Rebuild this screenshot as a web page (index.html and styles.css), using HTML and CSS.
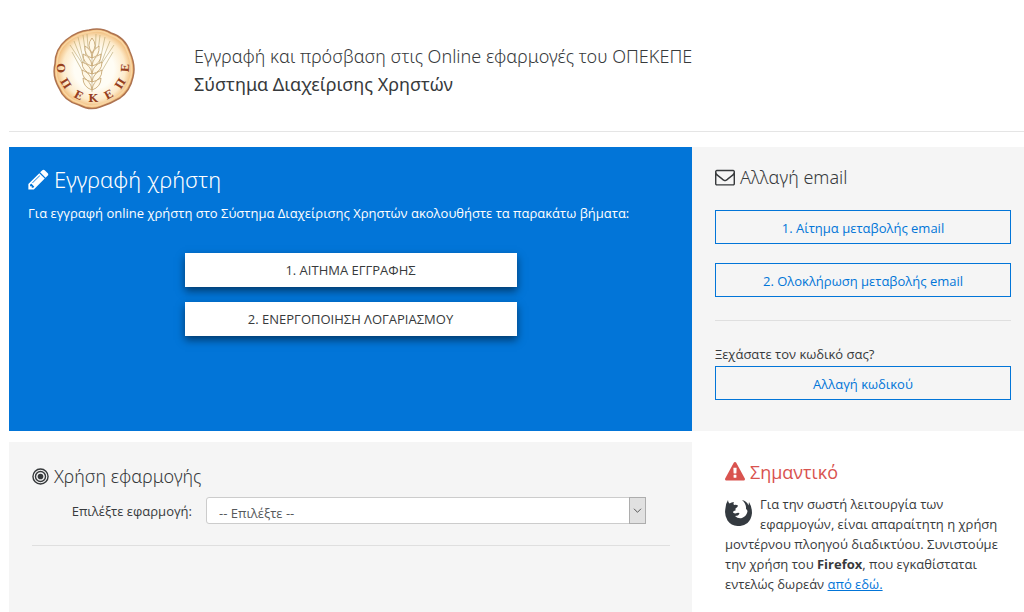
FILE: index.html
```html
<!DOCTYPE html>
<html lang="el">
<head>
<meta charset="utf-8">
<meta name="viewport" content="width=device-width, initial-scale=1">
<title>Σύστημα Διαχείρισης Χρηστών</title>
<link rel="stylesheet" href="styles.css">
</head>
<body>
<div class="page">
  <header class="header">
    <svg class="logo" viewBox="0 0 82 82" role="img" aria-label="ΟΠΕΚΕΠΕ">
      <defs>
        <radialGradient id="disc"><stop offset="0.5" stop-color="#fffdf5"/><stop offset="0.78" stop-color="#fdebcb"/><stop offset="1" stop-color="#eeb268"/></radialGradient>
        <path id="arc" d="M5 30A36 36 0 1 0 75 30"/>
      </defs>
      <path d="M36 2Q48 -1 58 5Q72 9 77 24Q83 38 80 49Q77 63 67 70Q57 76 47 79Q37 83 26 77Q11 73 6 60Q-1 48 2 36Q2 21 13 12Q24 3 36 2Z" fill="url(#disc)" stroke="#ad7351" stroke-width="1.500"/>
      <path d="M37 4Q48 1 57 7Q71 11 75 25Q80 38 78 48Q75 61 65 68Q56 74 46 77Q36 80 27 75Q13 71 8 59Q1 48 4 37Q4 22 14 14Q25 5 37 4Z" fill="none" stroke="#f9d6a4" stroke-width="1.500"/>
      <g fill="none" stroke="#b5a36b" stroke-width=".6">
        <path d="M39 64Q39 42 39 10M36 50L30 7M34 47L25 9M33 43L21 13M31 38L17 17M31 46L19 24M42 50L47 7M44 47L52 9M45 43L57 13M47 38L61 17M47 46L60 24M36 32L34 6M42 32L43 6"/>
      </g>
      <g fill="#fff8e6" stroke="#c2a06a" stroke-width=".8">
        <path d="M39 10Q33 17 39 25Q45 17 39 10Z"/>
        <path d="M39 30Q31 28 32 18Q39 22 39 30ZM39 30Q47 28 46 18Q39 22 39 30Z"/>
        <path d="M39 38Q30 36 30 26Q38 29 39 38ZM39 38Q48 36 48 26Q40 29 39 38Z"/>
        <path d="M39 46Q29 44 29 34Q38 37 39 46ZM39 46Q49 44 49 34Q40 37 39 46Z"/>
        <path d="M39 54Q29 52 29 42Q38 45 39 54ZM39 54Q49 52 49 42Q40 45 39 54Z"/>
        <path d="M39 62Q30 59 30 50Q38 53 39 62ZM39 62Q48 59 48 50Q40 53 39 62Z"/>
      </g>
      <g class="logo-text">
        <text><textPath href="#arc" startOffset="8%">Ο</textPath></text>
        <text><textPath href="#arc" startOffset="22%">Π</textPath></text>
        <text><textPath href="#arc" startOffset="37%">Ε</textPath></text>
        <text><textPath href="#arc" startOffset="50%">Κ</textPath></text>
        <text><textPath href="#arc" startOffset="64%">Ε</textPath></text>
        <text><textPath href="#arc" startOffset="78%">Π</textPath></text>
        <text><textPath href="#arc" startOffset="92%">Ε</textPath></text>
      </g>
    </svg>
    <div class="titles">
      <p class="subtitle">Εγγραφή και πρόσβαση στις Online εφαρμογές του ΟΠΕΚΕΠΕ</p>
      <h1 class="title">Σύστημα Διαχείρισης Χρηστών</h1>
    </div>
  </header>

  <main class="panels">
    <section class="panel register">
      <h2 class="heading heading-large">
        <svg class="icon icon-pencil" viewBox="100 100 1600 1600" aria-hidden="true"><path d="M491 1536l91-91-235-235-91 91v107h128v128h107zm523-928q0-22-22-22-10 0-17 7l-542 542q-7 7-7 17 0 22 22 22 10 0 17-7l542-542q7-7 7-17zm-54-192l416 416-832 832h-416v-416zm683 96q0 53-37 90l-166 166-416-416 166-165q36-38 90-38 53 0 91 38l235 234q37 39 37 91z"/></svg>
        Εγγραφή χρήστη
      </h2>
      <p class="intro">Για εγγραφή online χρήστη στο Σύστημα Διαχείρισης Χρηστών ακολουθήστε τα παρακάτω βήματα:</p>
      <div class="steps">
        <button type="button" class="button button-raised">1. ΑΙΤΗΜΑ ΕΓΓΡΑΦΗΣ</button>
        <button type="button" class="button button-raised">2. ΕΝΕΡΓΟΠΟΙΗΣΗ ΛΟΓΑΡΙΑΣΜΟΥ</button>
      </div>
    </section>

    <section class="panel account">
      <h2 class="heading">
        <svg class="icon" viewBox="0 0 1792 1792" aria-hidden="true"><path d="M1664 1504v-768q-32 36-69 66-268 206-426 338-51 43-83 67t-86.500 48.500-102.500 24.500h-2q-48 0-102.500-24.500t-86.500-48.500-83-67q-158-132-426-338-37-30-69-66v768q0 13 9.500 22.500t22.500 9.500h1472q13 0 22.500-9.500t9.500-22.500zm0-1051v-24.500l-.5-13-3-12.500-5.500-9-9-7.500-14-2.500h-1472q-13 0-22.500 9.500t-9.500 22.500q0 168 147 284 193 152 401 317 6 5 35 29.500t46 37.500 44.500 31.500 50.500 27.500 43 9h2q20 0 43-9t50.500-27.500 44.500-31.500 46-37.500 35-29.500q208-165 401-317 54-43 100.500-115.500t46.500-131.500zm128-37v1088q0 66-47 113t-113 47h-1472q-66 0-113-47t-47-113v-1088q0-66 47-113t113-47h1472q66 0 113 47t47 113z"/></svg>
        Αλλαγή email
      </h2>
      <div class="email-actions">
        <button type="button" class="button button-outline">1. Αίτημα μεταβολής email</button>
        <button type="button" class="button button-outline">2. Ολοκλήρωση μεταβολής email</button>
      </div>
      <hr class="rule">
      <p class="forgot">Ξεχάσατε τον κωδικό σας?</p>
      <button type="button" class="button button-outline">Αλλαγή κωδικού</button>
    </section>

    <section class="panel usage">
      <h2 class="heading">
        <svg class="icon bullseye" viewBox="0 0 18 18" aria-hidden="true"><circle cx="9" cy="9" r="8"/><circle cx="9" cy="9" r="5.300"/><circle class="dot" cx="9" cy="9" r="3"/></svg>
        Χρήση εφαρμογής
      </h2>
      <div class="field">
        <label for="app">Επιλέξτε εφαρμογή:</label>
        <div class="select-box">
          <select id="app" class="select"><option>-- Επιλέξτε --</option></select>
          <svg class="select-arrow" viewBox="0 0 17 27" aria-hidden="true"><path d="M4.500 11.500l4 4 4-4"/></svg>
        </div>
      </div>
      <hr class="rule">
    </section>

    <aside class="notice">
      <h2 class="heading heading-alert">
        <svg class="icon" viewBox="0 0 1792 1792" aria-hidden="true"><path d="M1024 1375v-190q0-14-9.500-23.500t-22.500-9.500h-192q-13 0-22.500 9.500t-9.500 23.500v190q0 14 9.500 23.500t22.500 9.500h192q13 0 22.500-9.500t9.500-23.500zm-2-374l18-459q0-12-10-19-13-11-24-11h-220q-11 0-24 11-10 7-10 21l17 457q0 10 10 16.500t24 6.500h185q14 0 23.500-6.500t10.500-16.500zm-14-934l768 1408q35 63-2 126-17 29-46.500 46t-63.500 17h-1536q-34 0-63.500-17t-46.500-46q-37-63-2-126l768-1408q17-31 47-49t65-18 65 18 47 49z"/></svg>
        Σημαντικό
      </h2>
      <svg class="firefox" viewBox="0 0 27 27" aria-hidden="true"><path d="M3 1Q3 3.500 4.500 4.500Q6.500 3 9 3Q8 4.500 9 6Q11.500 5.500 13 6.500Q13 8 10.500 9.500L10.500 11.500Q8 11.500 8 13.500Q10 15 12 14Q14 13.500 14.500 14.500Q13.500 17 10 17Q13 20 17 19Q22 17 22.500 12Q22 10.500 21 10Q21.500 5 17 1Q22 2 23.500 6.500L24 3Q27 8 27 14Q26.500 20 22.500 24Q18 27.500 12.500 27Q6 26.500 2.500 21.500Q-1 16 0.500 9Q1 4 3 1Z"/></svg>
      <p class="notice-text">Για την σωστή λειτουργία των εφαρμογών, είναι απαραίτητη η χρήση μοντέρνου πλοηγού διαδικτύου. Συνιστούμε την χρήση του <strong>Firefox</strong>, που εγκαθίσταται εντελώς δωρεάν <a href="#firefox">από εδώ.</a></p>
    </aside>
  </main>
</div>
</body>
</html>
```
FILE: styles.css
```css
* { box-sizing: border-box; }
html, body { height: 100%; }
body {
  margin: 0;
  background: #fff;
  color: #373a3c;
  font-family: "Open Sans", "Noto Sans", sans-serif;
  font-size: 13px;
  line-height: 20px;
}
h1, h2, p { margin: 0; }
.page {
  display: flex;
  flex-direction: column;
  min-height: 100%;
  padding-left: 9px;
}
.header {
  display: flex;
  align-items: flex-start;
  gap: 59px;
  padding: 28px 44px 21px;
  border-bottom: 1px solid #e5e5e5;
}
.logo { width: 82px; height: 82px; flex: none; }
.logo-text {
  font-family: "DejaVu Serif", serif;
  font-size: 11px;
  font-weight: 700;
  fill: #96401f;
  text-anchor: middle;
}
.titles { padding-top: 14px; }
.subtitle,
.title {
  font-family: "Noto Sans", "Open Sans", sans-serif;
  font-size: 18px;
  line-height: 28px;
}
.subtitle { font-weight: 300; }
.title { font-weight: 400; }
.panels {
  flex: 1;
  display: grid;
  grid-template-columns: minmax(0, 1fr) 332px;
  grid-template-rows: auto 1fr;
  row-gap: 11px;
  padding-top: 15px;
}
.panel { background: #f5f5f5; }
.register {
  background: #0275d8;
  color: #fff;
  padding: 17px 19px 95px;
}
.account { padding: 16px 13px 30px 23px; }
.usage { padding: 20px 22px 20px 23px; }
.notice { padding: 16px 23px 16px 33px; }
.heading {
  display: flex;
  align-items: center;
  gap: 5px;
  font-family: "Noto Sans", "Open Sans", sans-serif;
  font-size: 18px;
  font-weight: 300;
  line-height: 28px;
}
.heading-large { font-size: 22px; line-height: 30px; }
.heading-alert { color: #d9534f; font-weight: 400; font-family: inherit; }
.icon { width: 20px; height: 20px; flex: none; fill: currentColor; }
.icon-pencil { width: 21px; height: 21px; }
.bullseye { width: 17px; height: 17px; fill: none; stroke: currentColor; stroke-width: 1.5; }
.bullseye .dot { fill: currentColor; stroke: none; }
.intro { padding-top: 9px; }
.steps {
  display: grid;
  gap: 15px;
  width: 332px;
  max-width: 100%;
  margin: 30px auto 0;
}
.button {
  display: block;
  width: 100%;
  height: 34px;
  padding: 2px 12px 0;
  border: 0;
  font: inherit;
  cursor: pointer;
}
.button-raised {
  padding-top: 0;
  background: #fff;
  color: #373a3c;
  box-shadow: 0 4px 8px rgba(0, 0, 0, 0.5);
}
.button-outline {
  background: transparent;
  border: 1px solid #0275d8;
  color: #0275d8;
}
.email-actions { display: grid; gap: 19px; padding-top: 19px; }
.rule { margin: 23px 0; border: 0; border-top: 1px solid #dfdfdf; }
.forgot { padding-bottom: 2px; }
.field {
  display: grid;
  grid-template-columns: 160px minmax(0, 440px);
  gap: 14px;
  align-items: center;
  padding-top: 7px;
}
.field label { text-align: right; }
.select-box { position: relative; }
.select {
  display: block;
  width: 100%;
  height: 27px;
  padding: 4px 24px 0 12px;
  appearance: none;
  border: 1px solid #ccc;
  border-radius: 3px;
  background: #fff;
  color: #55595c;
  font: inherit;
}
.select-arrow {
  position: absolute;
  top: 0;
  right: 0;
  width: 17px;
  height: 27px;
  background: #e1e1e1;
  border: 1px solid #adadad;
  fill: none;
  stroke: #444;
  pointer-events: none;
}
.usage .rule { margin: 21px 0 0; }
.firefox {
  float: left;
  width: 27px;
  height: 27px;
  margin: 13px 8px 0 0;
  fill: #343a40;
}
.notice-text { padding-top: 8px; }
.notice-text a { color: #0275d8; text-decoration: underline; }
```
